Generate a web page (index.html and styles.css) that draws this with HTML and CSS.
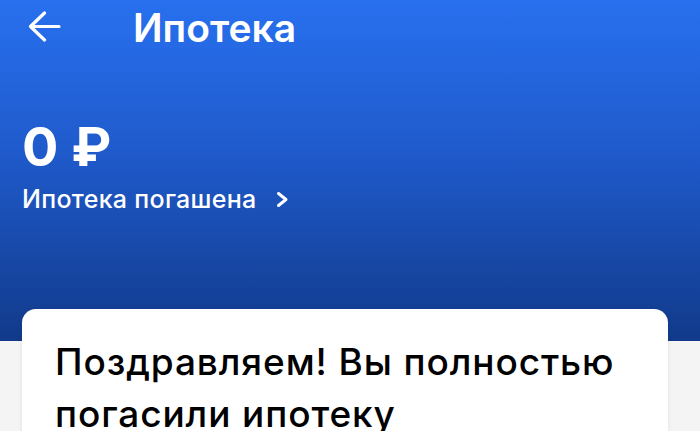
FILE: index.html
```html
<!DOCTYPE html>
<html lang="ru">
<head>
<meta charset="utf-8">
<link rel="stylesheet" href="styles.css">
</head>
<body>
<div class="hero">
  <div class="topbar">
    <svg class="back" width="34" height="32" viewBox="0 0 34 32">
      <path d="M32 15.5 H4 M17.5 2 L3.5 15.5 L17.5 29" fill="none" stroke="#fff" stroke-width="3.2" stroke-linecap="round" stroke-linejoin="round"/>
    </svg>
    <div class="title">Ипотека</div>
  </div>
  <div class="amount">0 ₽</div>
  <div class="status">Ипотека погашена
    <svg class="chev" width="15" height="17" viewBox="0 0 15 17">
      <path d="M3.5 2.5 L11 8.5 L3.5 14.5" fill="none" stroke="#fff" stroke-width="3" stroke-linecap="round" stroke-linejoin="round"/>
    </svg>
  </div>
</div>
<div class="card">
  <h1 class="headline">Поздравляем! Вы полностью погасили ипотеку</h1>
</div>
</body>
</html>
```
FILE: styles.css
```css
html, body {
  margin: 0;
  padding: 0;
}
body {
  background: #f4f4f4;
  font-family: "Inter", "Noto Sans", sans-serif;
  width: 700px;
  height: 431px;
  overflow: hidden;
}
.hero {
  height: 341px;
  background: linear-gradient(180deg, #2870ef 0%, #1f5acb 45%, #113a8a 100%);
  color: #fff;
  box-sizing: border-box;
  padding: 0 0 0 22px;
}
.topbar {
  display: flex;
  align-items: center;
  height: 56px;
}
.back {
  margin-left: 5px;
  margin-top: -2px;
}
.title {
  margin-left: 72px;
  font-size: 39px;
  font-weight: 600;
  letter-spacing: 0;
  margin-top: -2px;
}
.amount {
  margin-top: 57px;
  font-size: 54px;
  font-weight: 700;
  line-height: 68px;
}
.status {
  display: flex;
  align-items: center;
  font-size: 25px;
  font-weight: 500;
  line-height: 30px;
  letter-spacing: 0.3px;
  margin-top: 3px;
}
.chev {
  margin-left: 18px;
}
.card {
  margin: -32px 32px 0 22px;
  background: #fff;
  border-radius: 14px 14px 0 0;
  box-shadow: 0 0 4px rgba(0,0,0,0.08);
  padding: 27px 20px 0 33px;
  height: 200px;
}
.headline {
  margin: 0;
  font-size: 37px;
  font-weight: 500;
  line-height: 52px;
  letter-spacing: 0.9px;
  color: #000;
}
```
